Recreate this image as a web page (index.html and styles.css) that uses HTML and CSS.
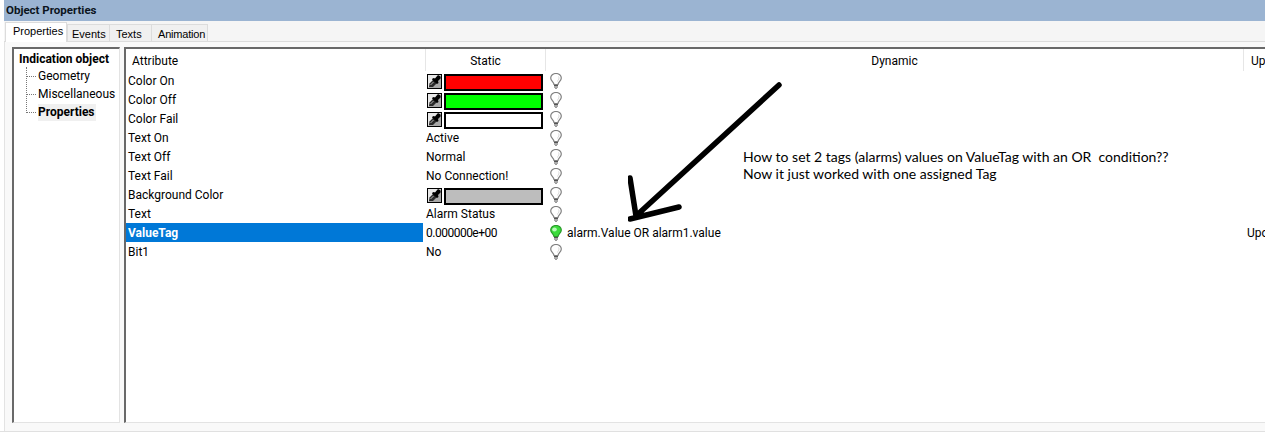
FILE: index.html
```html
<!DOCTYPE html>
<html lang="en">
<head>
<meta charset="utf-8">
<title>Object Properties</title>
<link rel="stylesheet" href="styles.css">
</head>
<body>
<svg class="defs" width="0" height="0" aria-hidden="true">
  <symbol id="bulb" viewBox="0 0 12 16">
    <path d="M4 11.500C4 9 .7 8 .7 5a5.300 4.500 0 0 1 10.600 0c0 3-3.300 4-3.300 6.500z" fill="#fff" stroke="#808080" stroke-width="1.200"/>
    <path d="M8.500 3.500c1 1.500.5 3.500-1.500 5" fill="none" stroke="#d8d8d8"/>
    <path d="M4 12.500h4M4 14h4" stroke="#555"/>
    <path d="M5 15.500h2" stroke="#999"/>
  </symbol>
  <symbol id="bulb-on" viewBox="0 0 12 16">
    <path d="M4 11.500C4 9 .7 8 .7 5a5.300 4.500 0 0 1 10.600 0c0 3-3.300 4-3.300 6.500z" fill="#3bdc3b" stroke="#2a9a2a" stroke-width="1.200"/>
    <ellipse cx="4.500" cy="4.500" rx="2.300" ry="2" fill="#b8f8b8"/>
    <path d="M4 12.500h4M4 14h4" stroke="#555"/>
    <path d="M5 15.500h2" stroke="#999"/>
  </symbol>
  <symbol id="dropper" viewBox="0 0 15 15">
    <rect x=".5" y=".5" width="14" height="14" fill="#a8a8a8" stroke="#000"/>
    <path d="M1 1h13L1 14z" fill="#e8e8e8"/>
    <path d="M2 13l.5-3.500 5-5 3.500 3.500-5 5z" fill="#2a2a2a"/>
    <path d="M6 4l2 .5 2.500-3c1.500-.8 3.800 1.500 3 3L11 7l.5 2-1.500 1L5 5.500z" fill="#000"/>
    <path d="M3.500 11l3-3" stroke="#b5b5b5"/>
  </symbol>
</svg>

<main class="window">
  <h1 class="title">Object Properties</h1>
  <nav class="tabs">
    <span class="tab tab-active">Properties</span>
    <span class="tab">Events</span>
    <span class="tab">Texts</span>
    <span class="tab">Animation</span>
  </nav>
  <section class="panel">
    <aside class="tree">
      <div class="tree-root">Indication object</div>
      <ul class="tree-list">
        <li class="tree-item">Geometry</li>
        <li class="tree-item">Miscellaneous</li>
        <li class="tree-item"><span class="tree-selected">Properties</span></li>
      </ul>
    </aside>
    <div class="grid">
      <div class="row head">
        <div class="c-attr head-attr">Attribute</div>
        <div class="c-static head-center">Static</div>
        <div class="c-dyn head-center">Dynamic</div>
        <div class="c-up">Up</div>
      </div>
      <div class="row">
        <div class="c-attr">Color On</div>
        <div class="c-static"><svg class="pick"><use href="#dropper"/></svg><span class="swatch sw-red"></span></div>
        <div class="c-dyn"><svg class="bulb"><use href="#bulb"/></svg></div>
      </div>
      <div class="row">
        <div class="c-attr">Color Off</div>
        <div class="c-static"><svg class="pick"><use href="#dropper"/></svg><span class="swatch sw-green"></span></div>
        <div class="c-dyn"><svg class="bulb"><use href="#bulb"/></svg></div>
      </div>
      <div class="row">
        <div class="c-attr">Color Fail</div>
        <div class="c-static"><svg class="pick"><use href="#dropper"/></svg><span class="swatch sw-white"></span></div>
        <div class="c-dyn"><svg class="bulb"><use href="#bulb"/></svg></div>
      </div>
      <div class="row">
        <div class="c-attr">Text On</div>
        <div class="c-static">Active</div>
        <div class="c-dyn"><svg class="bulb"><use href="#bulb"/></svg></div>
      </div>
      <div class="row">
        <div class="c-attr">Text Off</div>
        <div class="c-static">Normal</div>
        <div class="c-dyn"><svg class="bulb"><use href="#bulb"/></svg></div>
      </div>
      <div class="row">
        <div class="c-attr">Text Fail</div>
        <div class="c-static">No Connection!</div>
        <div class="c-dyn"><svg class="bulb"><use href="#bulb"/></svg></div>
      </div>
      <div class="row">
        <div class="c-attr">Background Color</div>
        <div class="c-static"><svg class="pick"><use href="#dropper"/></svg><span class="swatch sw-gray"></span></div>
        <div class="c-dyn"><svg class="bulb"><use href="#bulb"/></svg></div>
      </div>
      <div class="row">
        <div class="c-attr">Text</div>
        <div class="c-static">Alarm Status</div>
        <div class="c-dyn"><svg class="bulb"><use href="#bulb"/></svg></div>
      </div>
      <div class="row">
        <div class="c-attr selected">ValueTag</div>
        <div class="c-static num">0.000000e+00</div>
        <div class="c-dyn"><svg class="bulb"><use href="#bulb-on"/></svg><span class="expr">alarm.Value OR alarm1.value</span></div>
        <div class="c-up">Upo</div>
      </div>
      <div class="row">
        <div class="c-attr">Bit1</div>
        <div class="c-static">No</div>
        <div class="c-dyn"><svg class="bulb"><use href="#bulb"/></svg></div>
      </div>
    </div>
  </section>
  <svg class="arrow" width="170" height="150" viewBox="0 0 170 150">
    <path d="M151 5 9 135M2 98l6 38M2 139l49-12" fill="none" stroke="#000" stroke-width="5.500" stroke-linecap="round"/>
  </svg>
  <p class="note">How to set 2 tags (alarms) values on ValueTag with an OR&nbsp; condition??<br>Now it just worked with one assigned Tag</p>
</main>
</body>
</html>
```
FILE: styles.css
```css
* { box-sizing: border-box; }
html, body { margin: 0; padding: 0; }
body {
  width: 1265px;
  height: 433px;
  overflow: hidden;
  background: #fff;
  font-family: "Roboto", "Noto Sans", sans-serif;
  font-size: 12px;
  color: #000;
}
.defs { position: absolute; }
.window {
  position: relative;
  height: 432px;
  padding-left: 4px;
  background: #fff;
  border-bottom: 1px solid #e0e0e0;
}
.title {
  margin: 0;
  height: 21px;
  padding: 2px 0 0 2px;
  background: #9bb4d2;
  font-size: 11.500px;
  line-height: 16px;
  font-weight: 700;
  color: #0c1420;
}
.tabs {
  display: flex;
  align-items: flex-end;
  height: 21px;
  background: #f5f5f5;
  border-bottom: 1px solid #dcdcdc;
  padding-left: 1px;
  font-family: "Liberation Sans", Arial, sans-serif;
  font-size: 11px;
}
.tab {
  height: 17px;
  padding: 0 5px;
  margin-left: -1px;
  background: #f0f0f0;
  border: 1px solid #dcdcdc;
  border-bottom: 0;
  line-height: 18px;
  white-space: nowrap;
}
.tab:nth-child(2) { width: 43px; margin-left: 0; padding-left: 4px; }
.tab:nth-child(3) { width: 43px; padding-left: 6px; }
.tab:nth-child(4) { width: 57px; padding-left: 6px; letter-spacing: -0.2px; }
.tab-active {
  width: 62px;
  height: 20px;
  margin: 0 0 -1px 0;
  padding-left: 7px;
  background: #fff;
  line-height: 17px;
}
.panel {
  display: flex;
  gap: 4px;
  height: 389px;
  padding: 5px 0 8px 7px;
  background: #f9f9f9;
  border-left: 1px solid #e3e3e3;
}
.tree {
  width: 108px;
  flex: none;
  background: #fff;
  border-left: 2px solid #696969;
  border-top: 2px solid #696969;
  border-right: 1px solid #e3e3e3;
  border-bottom: 1px solid #e3e3e3;
  padding: 2px 0 0 5px;
}
.tree-root {
  height: 16px;
  line-height: 17px;
  font-weight: 700;
  white-space: nowrap;
}
.tree-list {
  margin: 0 0 0 6px;
  padding: 0;
  list-style: none;
}
.tree-item {
  position: relative;
  height: 18px;
  line-height: 18px;
  padding-left: 13px;
  white-space: nowrap;
}
.tree-item::before {
  content: "";
  position: absolute;
  left: 1px;
  top: 0;
  width: 9px;
  height: 9px;
  border-left: 1px dotted #777;
  border-bottom: 1px dotted #777;
}
.tree-item + .tree-item::before { top: -9px; height: 18px; }
.tree-selected {
  display: inline-block;
  font-weight: 700;
  background: #f0f0f0;
  line-height: 17px;
  padding-right: 1px;
}
.grid {
  flex: 1;
  min-width: 0;
  overflow: hidden;
  background: #fff;
  border-left: 2px solid #696969;
  border-top: 2px solid #696969;
  border-bottom: 1px solid #e3e3e3;
}
.row {
  display: flex;
  height: 19px;
  line-height: 21px;
  white-space: nowrap;
}
.head {
  height: 22px;
  line-height: 25px;
}
.head > div { border-right: 1px solid #e6e6e6; }
.c-attr { width: 300px; flex: none; padding-left: 2px; }
.head .head-attr { padding-left: 6px; }
.head-center { text-align: center; }
.c-static {
  width: 120px;
  flex: none;
  display: flex;
  align-items: flex-start;
}
.head .c-static { display: block; }
.num { letter-spacing: -0.5px; }
.c-dyn {
  width: 698px;
  flex: none;
  display: flex;
  align-items: flex-start;
  padding-left: 4px;
}
.head .c-dyn { display: block; padding-left: 0; }
.head .c-up { border-right: 0; padding-left: 7px; }
.c-up { padding-left: 3px; }
.selected {
  width: 297px;
  margin-right: 3px;
  background: #0078d7;
  color: #fff;
  font-weight: 700;
}
.pick { width: 15px; height: 15px; flex: none; margin: 3px 0 0 1px; }
.swatch {
  width: 99px;
  height: 17px;
  flex: none;
  margin: 3px 0 0 2px;
  border: 2px solid #000;
}
.sw-red { background: #f00; }
.sw-green { background: #0f0; }
.sw-white { background: #fff; }
.sw-gray { background: #bdbdbd; }
.bulb { width: 12px; height: 16px; flex: none; margin-top: 2px; }
.expr { margin-left: 5px; }
.arrow {
  position: absolute;
  left: 628px;
  top: 80px;
}
.note {
  position: absolute;
  left: 743px;
  top: 148px;
  margin: 0;
  font-family: "Lato", "Open Sans", sans-serif;
  font-size: 14px;
  line-height: 17px;
  white-space: nowrap;
}
```
